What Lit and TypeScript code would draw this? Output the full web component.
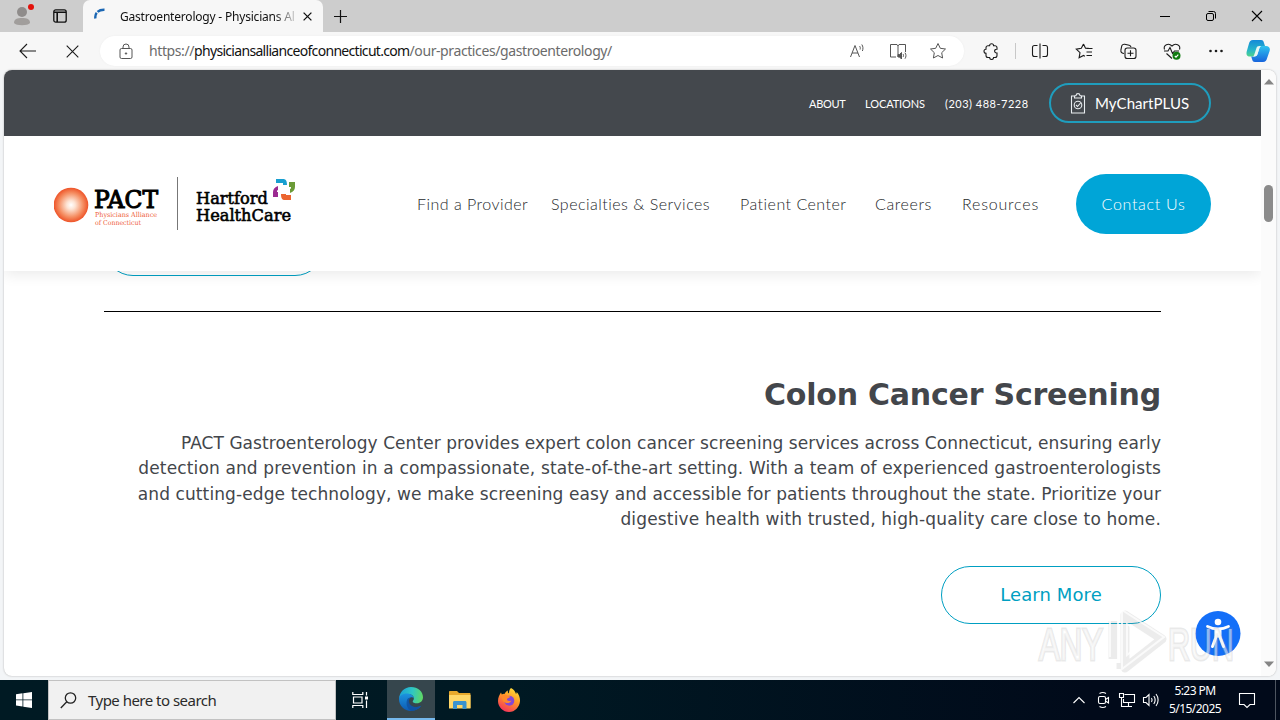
import { LitElement, css, html, svg } from 'lit';
import { customElement } from 'lit/decorators.js';

@customElement('browser-tabs')
export class BrowserTabs extends LitElement {
    render() {
        return html`
            <div class="profile">
                <svg width="26" height="28" viewBox="0 0 26 28">
                    <circle cx="12" cy="11" r="5" fill="#8f8c8b" />
                    <path d="M4 22c0-4 3-5 8-5s8 1 8 5c-2 3-14 3-16 0z" fill="#a19e9c" />
                    <circle cx="21" cy="6" r="3" fill="#e3120b" />
                </svg>
            </div>
            <div class="actions">
                <svg width="14" height="14" viewBox="0 0 14 14" fill="none" stroke="#111" stroke-width="1.3">
                    <rect x=".8" y=".8" width="12.4" height="12.4" rx="2" />
                    <path d="M1 3.2h12M4.2 3v10" stroke-width="1.6" />
                </svg>
            </div>
            <div class="tab">
                <svg class="spinner" width="14" height="14" viewBox="0 0 14 14" fill="none" stroke="#1a66b3" stroke-width="2.4">
                    <path d="M1.400 10.500C.6 5 4.500 1.500 10.500 1.700" stroke-dasharray="6 1.200 9" />
                </svg>
                <span class="title">Gastroenterology - Physicians Alliance</span>
                <svg width="9" height="9" viewBox="0 0 9 9" stroke="#111" stroke-width="1.3"><path d="M.6.6l7.800 7.800M8.400.6L.6 8.400" /></svg>
            </div>
            <svg class="add" width="13" height="13" viewBox="0 0 13 13" stroke="#111" stroke-width="1.2"><path d="M6.500 0v13M0 6.500h13" /></svg>
            <div class="controls">
                <svg width="46" height="32" viewBox="0 0 46 32"><path d="M18 16.500h10" stroke="#000" /></svg>
                <svg width="46" height="32" viewBox="0 0 46 32" fill="none" stroke="#000">
                    <rect x="18.500" y="13.500" width="7" height="7" rx="1.500" />
                    <path d="M20.500 11.500h5a2 2 0 0 1 2 2v5" />
                </svg>
                <svg width="46" height="32" viewBox="0 0 46 32" stroke="#000" stroke-width="1.100"><path d="M18 11l10 10M28 11L18 21" /></svg>
            </div>
        `;
    }

    static styles = css`
        :host {
            display: flex;
            height: 32px;
            background: #cdcdcd;
            align-items: center;
            font-family: 'Noto Sans', sans-serif;
        }
        .profile {
            width: 43px;
            padding-left: 10px;
            box-sizing: border-box;
            height: 30px;
        }
        .actions {
            width: 40px;
            padding-left: 10px;
            box-sizing: border-box;
            display: flex;
        }
        .tab {
            display: flex;
            align-items: center;
            width: 240px;
            height: 32px;
            padding: 0 11px 0 11px;
            box-sizing: border-box;
            background: #f7f7f7;
            border-radius: 7px 7px 0 0;
        }
        .spinner {
            margin-top: -2px;
        }
        .title {
            flex: 1;
            margin: 0 9px 0 12px;
            overflow: hidden;
            white-space: nowrap;
            font-size: 12px;
            letter-spacing: -0.2px;
            color: #111;
            mask-image: linear-gradient(90deg, #000 154px, transparent 180px);
        }
        .add {
            margin-left: 11px;
        }
        .controls {
            display: flex;
            margin-left: auto;
        }
    `;
}

const toolIcons = {
    split: svg`<path d="M7.500 4.500h-3a2 2 0 0 0-2 2v7a2 2 0 0 0 2 2h3M12.500 4.500h3a2 2 0 0 1 2 2v7a2 2 0 0 1-2 2h-3M10 2.500v15" />`,
    favorites: svg`<path d="M9.500 3l2 4.300h3.200M9.500 3L7.300 7.300l-5 .8 3.700 3.500-.9 5.200 4.400-2.400 1.400.8M12.500 7.500h6M12.500 11h5.500M12.500 14.500h5.500" />`,
    collections: svg`<path d="M6 12.500l-1.200-.3a2.500 2.500 0 0 1-1.900-3l.8-4a2.500 2.500 0 0 1 3-1.900l4.500 1a2.500 2.500 0 0 1 1.800 1.700" /><rect x="7" y="7" width="11" height="10.500" rx="2.300" /><path d="M12.500 9.300v6M9.500 12.300h6" />`,
};

@customElement('browser-toolbar')
export class BrowserToolbar extends LitElement {
    render() {
        return html`
            <div class="btn">
                <svg width="18" height="16" viewBox="0 0 18 16"><path d="M17 8H1.500M8 1L1 8l7 7" /></svg>
            </div>
            <div class="btn">
                <svg width="13" height="13" viewBox="0 0 13 13"><path d="M.7.7l11.600 11.600M12.300.7L.7 12.300" /></svg>
            </div>
            <div class="address">
                <svg width="14" height="17" viewBox="0 0 14 17" stroke="#555">
                    <rect x="1" y="5.500" width="12" height="10" rx="1.500" />
                    <path d="M4 5.500V4a3 3 0 0 1 6 0v1.500" />
                    <circle cx="7" cy="10.500" r=".7" fill="#555" />
                </svg>
                <span class="url">https://<b>physiciansallianceofconnecticut.com</b>/our-practices/gastroenterology/</span>
                <div class="tool">
                    <svg width="18" height="18" viewBox="0 0 18 18"><path d="M1.500 15L6 3.500 10.500 15M3 11h6M10.500 4c.8 1 1 2.200.6 3.500M12.800 2.500c1.300 2 1.500 4.200.6 6.500" /></svg>
                </div>
                <div class="tool">
                    <svg width="18" height="18" viewBox="0 0 18 18">
                        <path d="M7 15H1.500V2.500H8L9 4l1-1.500h6.500V10M9 4v11" />
                        <path d="M9 12.500h1.500l2-2v6.500l-2-2H9z" fill="#555" />
                        <path d="M14 12c.7 1 .7 2 0 3M16 10.700c1.300 2 1.300 4 0 6" />
                    </svg>
                </div>
                <div class="tool">
                    <svg width="18" height="18" viewBox="0 0 18 18"><path d="M9 1.500l2.300 4.800 5.200.7-3.800 3.700.9 5.300L9 13.500 4.400 16l.9-5.300L1.500 7l5.200-.7z" /></svg>
                </div>
            </div>
            <div class="btn ext">
                <svg width="18" height="18" viewBox="0 0 18 18"><path d="M6 3.700h1.600a2 2 0 1 1 4 0H13a2 2 0 0 1 2 2v1.500h-.5a1.900 1.900 0 1 0 0 3.800h.5v2.500a2 2 0 0 1-2 2h-1.400a2 2 0 1 1-4 0H6a2 2 0 0 1-2-2V11.300a2 2 0 1 1 0-4V5.700a2 2 0 0 1 2-2z" /></svg>
            </div>
            <div class="separator"></div>
            <div class="btn"><svg width="20" height="20" viewBox="0 0 20 20">${toolIcons.split}</svg></div>
            <div class="btn"><svg width="20" height="20" viewBox="0 0 20 20">${toolIcons.favorites}</svg></div>
            <div class="btn"><svg width="20" height="20" viewBox="0 0 20 20">${toolIcons.collections}</svg></div>
            <div class="btn">
                <svg width="20" height="20" viewBox="0 0 20 20">
                    <path d="M2.500 8.500C1 4 6.500 1.500 10 5c3.500-3.500 9-1 7.500 3.500M4.500 12.500L10 17.500M2 10h4l2-3.500 2.500 6L12.500 10H17" />
                    <circle cx="14.500" cy="14.800" r="4" fill="#107c10" stroke="none" />
                    <path d="M12.800 15l1.200 1.100 2.300-2.500" stroke="#fff" />
                </svg>
            </div>
            <div class="btn">
                <svg width="16" height="4" viewBox="0 0 16 4" class="dots"><circle cx="2.500" cy="2" r="1.300" /><circle cx="8" cy="2" r="1.300" /><circle cx="13.500" cy="2" r="1.300" /></svg>
            </div>
            <div class="copilot">
                <svg width="24" height="24" viewBox="0 0 24 24">
                    <defs>
                        <linearGradient id="left" x1="0" y1="0" x2="0" y2="1"><stop offset="0" stop-color="#1489d8" /><stop offset=".6" stop-color="#27b6c9" /><stop offset="1" stop-color="#4fd38a" /></linearGradient>
                        <linearGradient id="right" x1="0" y1="0" x2="0" y2="1"><stop offset="0" stop-color="#2ec3ef" /><stop offset="1" stop-color="#1764dc" /></linearGradient>
                    </defs>
                    <path d="M7 1h8c2 0 2.500 1 3 3l1 3h-4c-2 0-2.600 1-3.200 3l-1.600 5c-.5 1.700-1.200 2.500-3 2.500H4c-3 0-4-2-3.300-5L3 4.500C3.700 2.200 4.500 1 7 1z" fill="url(#left)" />
                    <path d="M17 23H9c-2 0-2.500-1-3-3l-.8-2.500H8c2 0 3-.8 3.600-2.700l1.800-5.600C14 7.500 14.500 7 16.500 7H20c3 0 4.500 2 3.600 5L21 19.500c-.7 2.300-1.500 3.500-4 3.500z" fill="url(#right)" />
                    <path d="M13.500 8.500c.6-1.200 1.200-1.500 2.500-1.500h-2.500c-2 0-2.600.7-3.200 2.500l-2 6c-.4 1.300-.8 2-2 2H8.500c1.800 0 2.600-.9 3.100-2.700z" fill="#e8f8f3" />
                </svg>
            </div>
        `;
    }

    static styles = css`
        :host {
            display: flex;
            align-items: center;
            height: 38px;
            padding: 0 2px 0 6px;
            box-sizing: border-box;
            background: #f7f7f7;
            font-family: 'Noto Sans', sans-serif;
        }
        svg {
            fill: none;
            stroke: #1b1b1b;
            stroke-width: 1.1;
        }
        .btn {
            display: flex;
            justify-content: center;
            width: 44px;
        }
        .dots {
            fill: #1b1b1b;
            stroke: none;
        }
        .address {
            display: flex;
            flex: 1;
            align-items: center;
            height: 30px;
            margin: 0 7px 0 6px;
            padding: 0 6px 0 19px;
            border-radius: 15px;
            background: #fff;
            box-shadow: 0 0 2px #ececec;
        }
        .address svg {
            stroke: #555;
            stroke-width: 1;
        }
        .url {
            flex: 1;
            margin: -1px 0 0 16px;
            font-size: 14px;
            letter-spacing: -0.4px;
            color: #6b6b6b;
            white-space: nowrap;
        }
        .url b {
            font-weight: 400;
            letter-spacing: -0.69px;
            color: #111;
        }
        .tool {
            display: flex;
            justify-content: center;
            width: 40px;
        }
        .ext {
            width: 40px;
        }
        .separator {
            width: 1px;
            height: 16px;
            margin: 0 2px 0 4px;
            background: #c8c8c8;
        }
        .copilot {
            display: flex;
            justify-content: center;
            width: 40px;
        }
        .copilot svg {
            stroke: none;
        }
    `;
}

@customElement('site-header')
export class SiteHeader extends LitElement {
    render() {
        return html`
            <div class="topbar">
                <a class="about">ABOUT</a>
                <a class="locations">LOCATIONS</a>
                <a class="phone">(203) 488-7228</a>
                <a class="chart">
                    <svg width="16" height="21" viewBox="0 0 16 21" fill="none" stroke="#e9edf0" stroke-width="1.100">
                        <path d="M4.500 3H1.500v17h13V3h-3M4.500 5V3L6 2.500C6.300 0 9.700 0 10 2.500l1.500.5v2z" />
                        <circle cx="8" cy="12" r="3.800" />
                        <path d="M6 12l1.500 1.500L11 9.500" />
                    </svg>
                    <span>MyChartPLUS</span>
                </a>
            </div>
            <div class="main">
                <svg class="logo" width="250" height="60" viewBox="0 0 250 60">
                    <defs>
                        <radialGradient id="sun"><stop offset="0" stop-color="#fff" /><stop offset=".25" stop-color="#fde3d3" /><stop offset=".7" stop-color="#f58e62" /><stop offset="1" stop-color="#ee5328" /></radialGradient>
                    </defs>
                    <circle cx="17" cy="31" r="17.300" fill="url(#sun)" />
                    <text x="40" y="33.500" class="pact" textLength="64" lengthAdjust="spacingAndGlyphs">PACT</text>
                    <text x="41" y="43" class="sub" textLength="62" lengthAdjust="spacingAndGlyphs">Physicians Alliance</text>
                    <text x="41" y="51" class="sub" textLength="46" lengthAdjust="spacingAndGlyphs">of Connecticut</text>
                    <path d="M123.500 3v53" stroke="#777" />
                    <text x="142" y="30" class="hhc" textLength="72" lengthAdjust="spacingAndGlyphs">Hartford</text>
                    <text x="142" y="47" class="hhc" textLength="95" lengthAdjust="spacingAndGlyphs">HealthCare</text>
                    <path d="M222 5h7c3 0 4 2 4 6h-4V9h-7z" fill="#189fd0" />
                    <path d="M235 8h6v5c0 3-2 5-5 6v-4c1 0 1-1 1-2h-2z" fill="#6b9b37" />
                    <path d="M219 20v-2c0-3 2-5 5-6v4c-1 0-1 1-1 2h1v5h-5z" fill="#9c2a92" />
                    <path d="M227 20h5v1h5v5h-6c-3 0-4-2-4-6z" fill="#ec6530" />
                </svg>
                <nav>
                    <a class="find">Find a Provider</a>
                    <a class="specialties">Specialties &amp; Services</a>
                    <a class="patient">Patient Center</a>
                    <a class="careers">Careers</a>
                    <a class="resources">Resources</a>
                </nav>
                <a class="contact">Contact Us</a>
            </div>
        `;
    }

    static styles = css`
        :host {
            display: block;
            position: relative;
            z-index: 1;
            box-shadow: 0 3px 14px rgba(0, 0, 0, 0.09);
            font-family: Lato, sans-serif;
            white-space: nowrap;
        }
        .topbar {
            display: flex;
            align-items: center;
            justify-content: flex-end;
            gap: 20px;
            height: 66px;
            padding-right: 50px;
            background: #44484d;
            color: #fff;
            font-size: 11px;
        }
        .about {
            width: 36px;
            letter-spacing: -0.3px;
        }
        .locations {
            width: 60px;
            letter-spacing: -0.1px;
        }
        .phone {
            width: 84px;
            letter-spacing: 0.5px;
        }
        .chart {
            display: flex;
            align-items: center;
            width: 162px;
            height: 40px;
            padding-left: 19px;
            box-sizing: border-box;
            border: 2px solid #1f9dbd;
            border-radius: 20px;
            font-size: 15px;
            letter-spacing: 0.05px;
        }
        .chart span {
            margin-left: 9px;
        }
        .main {
            display: flex;
            align-items: center;
            height: 135px;
            padding: 0 50px;
            background: #fff;
        }
        .logo {
            font-family: 'DejaVu Serif', serif;
        }
        .pact {
            font-size: 24px;
            stroke: #000;
            stroke-width: 1.1;
        }
        .sub {
            font-size: 6.8px;
            fill: #ee5a36;
        }
        .hhc {
            font-size: 17px;
            stroke: #000;
            stroke-width: 0.6;
        }
        nav {
            display: flex;
            margin-left: auto;
            margin-right: 37px;
            padding-bottom: 1px;
            color: #25282b;
            font-size: 16px;
            font-weight: 300;
            letter-spacing: 0.48px;
        }
        .find {
            width: 134px;
        }
        .specialties {
            width: 189px;
        }
        .patient {
            width: 135px;
        }
        .careers {
            width: 87px;
            letter-spacing: 0.6px;
        }
        .resources {
            width: 77px;
            letter-spacing: 0.8px;
        }
        .contact {
            width: 135px;
            height: 60px;
            border-radius: 30px;
            background: #00a5d7;
            color: #fff;
            font-size: 16px;
            font-weight: 300;
            letter-spacing: 0.7px;
            line-height: 59px;
            text-align: center;
        }
    `;
}

@customElement('site-content')
export class SiteContent extends LitElement {
    render() {
        return html`
            <a class="button"></a>
            <hr />
            <section>
                <h2>Colon Cancer Screening</h2>
                <p>
                    <span class="l1">PACT Gastroenterology Center provides expert colon cancer screening services across Connecticut, ensuring early</span>
                    <span class="l2">detection and prevention in a compassionate, state-of-the-art setting. With a team of experienced gastroenterologists</span>
                    <span class="l3">and cutting-edge technology, we make screening easy and accessible for patients throughout the state. Prioritize your</span>
                    <span class="l4">digestive health with trusted, high-quality care close to home.</span>
                </p>
                <a class="button">Learn More</a>
            </section>
        `;
    }

    static styles = css`
        :host {
            display: block;
            margin-top: -53px;
            padding: 0 100px;
            color: #43464b;
            font-family: 'DejaVu Sans', Verdana, sans-serif;
        }
        .button {
            display: block;
            width: 220px;
            height: 58px;
            box-sizing: border-box;
            border: 1px solid #009fc2;
            border-radius: 29px;
            color: #009fc2;
            font-size: 18px;
            letter-spacing: 0.1px;
            line-height: 56px;
            text-align: center;
        }
        hr {
            height: 1px;
            margin: 35px 0 0;
            border: 0;
            background: #000;
        }
        section {
            display: flex;
            flex-direction: column;
            align-items: flex-end;
            padding-top: 63px;
            text-align: right;
        }
        h2 {
            margin: 0;
            font-size: 30px;
            letter-spacing: -0.21px;
            line-height: 40px;
            white-space: nowrap;
        }
        p {
            margin: 15.5px 0 33.5px;
            font-size: 17px;
            line-height: 25.5px;
            white-space: nowrap;
        }
        p span {
            display: block;
        }
        .l1 {
            letter-spacing: 0.053px;
        }
        .l2 {
            letter-spacing: 0.139px;
        }
        .l3 {
            letter-spacing: 0.102px;
        }
        .l4 {
            letter-spacing: 0.17px;
        }
    `;
}

@customElement('task-bar')
export class TaskBar extends LitElement {
    render() {
        return html`
            <div class="item start">
                <svg width="16" height="16" viewBox="0 0 16 16" fill="#fff"><path d="M0 2.200L6.500 1.300v6.200H0zM7.300 1.200L16 0v7.500H7.300zM0 8.300h6.500v6.200L0 13.600zM7.300 8.300H16V16l-8.700-1.200z" /></svg>
            </div>
            <div class="search">
                <svg width="17" height="17" viewBox="0 0 17 17" fill="none" stroke="#222" stroke-width="1.300"><circle cx="10.500" cy="6" r="5.200" /><path d="M6.800 9.700L.8 16" /></svg>
                <span>Type here to search</span>
            </div>
            <div class="item view">
                <svg width="17" height="16" viewBox="0 0 17 16" fill="none" stroke="#fff" stroke-width="1.200">
                    <path d="M.8 0v2.500h10V0M.8 16v-2.500h10V16M1.500 5h8.500v6H1.500zM14.500 0v3.500M14.500 8.500V16" />
                    <path d="M13 4.500h3v3h-3z" fill="#fff" stroke="none" />
                </svg>
            </div>
            <div class="item active">
                <svg width="24" height="24" viewBox="0 0 24 24">
                    <defs>
                        <linearGradient id="wave" x1="0" y1=".3" x2="1" y2=".4"><stop offset="0" stop-color="#1a9fd8" /><stop offset=".55" stop-color="#2fc7c4" /><stop offset="1" stop-color="#5fd865" /></linearGradient>
                        <linearGradient id="deep" x1="0" y1="0" x2="0" y2="1"><stop offset="0" stop-color="#1c94e0" /><stop offset="1" stop-color="#0d5ab2" /></linearGradient>
                    </defs>
                    <path d="M0 11.500C.6 5 5.500 0 12 0c7 0 12 4.800 12 10.300 0 3.700-2.800 6-6 6-2.600 0-4.300-.9-4.300-1.800 0-.8 1.200-1.200 1.200-3C14.900 9 12.500 7 9 7c-4 0-7.500 2-9 4.500z" fill="url(#wave)" />
                    <path d="M0 12c0-3 3.600-5.600 7.700-5.600 4 0 7 2.200 7.200 5-1-1.200-2.100-1.500-3.300-1-2.200 1-3.400 6 .7 8.600 3 1.800 6.800 1.500 9.900-.2C20 22 16.300 24 12 24 5.400 24 0 18.700 0 12z" fill="url(#deep)" />
                    <path d="M8 13c-1.500 5 1 10 5 11 3.800-.3 7.200-2.400 9.200-5.200-4.500 2.200-10.800 1.500-12-3.800C9.700 12.800 10.500 11 11.600 10.400 9.500 10.500 8.500 11.500 8 13z" fill="#104f9d" opacity=".8" />
                </svg>
            </div>
            <div class="item">
                <svg width="22" height="20" viewBox="0 0 22 20">
                    <path d="M0 2c0-.6.400-1 1-1h7l2 2h10.500c.6 0 1 .4 1 1v14H0z" fill="#e8a92c" />
                    <path d="M0 5h21.500v13.500H0z" fill="#ffd768" />
                    <path d="M4 19v-6.500c0-1 .7-1.500 1.500-1.500h10.500c1 0 1.500.6 1.500 1.500V19h-4v-4h-5.500v4z" fill="#3a93cf" />
                </svg>
            </div>
            <div class="item">
                <svg width="24" height="24" viewBox="0 0 24 24">
                    <defs>
                        <linearGradient id="fire" x1=".8" y1="0" x2=".3" y2="1"><stop offset="0" stop-color="#ffe23b" /><stop offset=".45" stop-color="#ff9a26" /><stop offset="1" stop-color="#f5315c" /></linearGradient>
                    </defs>
                    <path d="M14 0c3 1.500 4.500 4 5 6 .6-.5.7-1.300.6-2 2.500 2.500 3.600 6 3.400 9-.4 6-5 11-11 11S1 19 1 13c0-3.500 1.500-6.500 3-8.500l.8 2c1-.8 2-1 3-.8C8.500 4 9.500 3 11 2.500 10.500 4 11 5 12 5.500 11.900 3.500 12.500 1.500 14 0z" fill="url(#fire)" />
                    <circle cx="12.300" cy="12.800" r="5" fill="#8447d6" />
                    <path d="M5 7c2-1 4-.5 5.500.8l3 .7c-.6 1.500-3 1.300-3.500 2.500-.3 1.600 1.600 2.700 4.500 1.500-1 3.300-6 3.500-8.500.5C4.700 11 4.500 9 5 7z" fill="#ff8a2a" />
                </svg>
            </div>
            <div class="tray">
                <svg width="24" height="20" viewBox="0 0 24 20"><path d="M6.500 13L12 7.500l5.500 5.500" /></svg>
                <svg width="24" height="20" viewBox="0 0 24 20"><rect x="7.500" y="6.500" width="7" height="7" rx="1.500" /><path d="M14.500 9.500l3-2v5.500l-3-2M8.500 3.500c2-1.200 4.500-1.200 6.500 0M8.500 16.500c2 1.200 4.500 1.200 6.500 0" /></svg>
                <svg width="24" height="20" viewBox="0 0 24 20"><path d="M9.500 4.500h10v8h-11V9M13.500 12.500v3.500M9 16.500h8M4.500 3.500h4v4h-4zM6.500 7.500V16.500h3" /></svg>
                <svg width="24" height="20" viewBox="0 0 24 20"><path d="M4.500 7.500H7l3-3v11l-3-3H4.500zM12.500 8c.8 1.300.8 2.700 0 4M14.800 6c1.700 2.500 1.700 5.500 0 8M17 4c2.800 3.500 2.800 8.500 0 12" /></svg>
            </div>
            <div class="clock"><span>5:23 PM</span><span>5/15/2025</span></div>
            <svg class="note" width="18" height="18" viewBox="0 0 18 18"><path d="M1.500 2.500h15v11H12l-3 3-3-3H1.500z" /></svg>
            <div class="desktop"></div>
        `;
    }

    static styles = css`
        :host {
            display: flex;
            align-items: center;
            height: 40px;
            background: linear-gradient(90deg, #001a23, #001923 40%, #010a1a 85%);
            color: #fff;
            font-family: 'Noto Sans', sans-serif;
        }
        .item {
            display: flex;
            align-items: center;
            justify-content: center;
            width: 49px;
            height: 40px;
            box-sizing: border-box;
        }
        .start {
            width: 48px;
        }
        .search {
            display: flex;
            align-items: center;
            width: 288px;
            height: 40px;
            padding-left: 11px;
            box-sizing: border-box;
            border: 1px solid #c2c2c2;
            background: #f1f1f1;
            color: #2b2b2b;
            font-size: 15px;
            letter-spacing: -0.52px;
        }
        .search span {
            margin-left: 11px;
        }
        .view {
            width: 51px;
            padding-right: 3px;
        }
        .active {
            width: 48px;
            border-bottom: 2px solid #76b9ed;
            background: #36464d;
        }
        .tray {
            display: flex;
            margin-left: auto;
        }
        .tray svg,
        .note {
            fill: none;
            stroke: #fff;
            stroke-width: 1.1;
        }
        .clock {
            display: flex;
            flex-direction: column;
            align-items: center;
            width: 64px;
            font-size: 12px;
            letter-spacing: -0.55px;
            line-height: 18px;
        }
        .note {
            margin: 0 19px 0 11px;
        }
        .desktop {
            width: 4px;
            height: 40px;
            border-left: 1px solid #4d5560;
        }
    `;
}

@customElement('app-root')
export class AppRoot extends LitElement {
    render() {
        return html`
            <browser-tabs></browser-tabs>
            <browser-toolbar></browser-toolbar>
            <div class="frame">
                <div class="page">
                    <site-header></site-header>
                    <site-content></site-content>
                </div>
                <div class="scrollbar">
                    <svg width="10" height="6" viewBox="0 0 10 6"><path d="M0 5.500L5 0l5 5.500z" /></svg>
                    <div class="thumb"></div>
                    <svg class="down" width="10" height="6" viewBox="0 0 10 6"><path d="M0 .5L5 6l5-5.500z" /></svg>
                </div>
            </div>
            <task-bar></task-bar>
            <svg class="access" width="46" height="46" viewBox="0 0 46 46">
                <circle cx="23" cy="22.500" r="22.500" fill="#146ff8" />
                <g fill="none" stroke="#fff" stroke-linecap="round" stroke-linejoin="round">
                    <circle cx="23" cy="11" r="3.300" fill="#fff" stroke="none" />
                    <path d="M12.500 15.500c3 1.500 6 2.500 10.500 2.500s7.500-1 10.500-2.500" stroke-width="2.800" />
                    <path d="M20.500 19.500h5v6h-5z" fill="#fff" stroke-width="2" />
                    <path d="M21 26l-3.500 9.500M25 26l3.500 9.500" stroke-width="3" />
                </g>
            </svg>
            <svg class="watermark" width="212" height="74" viewBox="0 0 212 74">
                <g class="shade">
                    <text x="3" y="54" textLength="64" lengthAdjust="spacingAndGlyphs">ANY</text>
                    <text x="132" y="54" textLength="66" lengthAdjust="spacingAndGlyphs">RUN</text>
                </g>
                <path class="ring" d="M77 15v38M89 9l37 24-37 29zM85 57v6" />
                <path class="line" d="M74 11v40M82 7v46M86 4l42 27-42 32zM91 18l22 14-22 17z" />
            </svg>
        `;
    }

    static styles = css`
        :host {
            display: flex;
            flex-direction: column;
            position: relative;
            width: 1280px;
            height: 720px;
            overflow: hidden;
            background: #f3f5f7;
        }
        .frame {
            display: flex;
            flex: 1;
            margin: 0 4px 4px;
            overflow: hidden;
            border-radius: 8px;
            background: #fff;
            box-shadow: 0 0 2px #aaa;
        }
        .page {
            width: 1257px;
            overflow: hidden;
        }
        .scrollbar {
            display: flex;
            flex: 1;
            flex-direction: column;
            align-items: center;
            padding: 9px 0;
            background: #fbfbfb;
            fill: #858585;
        }
        .thumb {
            width: 9px;
            height: 37px;
            margin-top: 100px;
            border-radius: 5px;
            background: #8b8b8b;
        }
        .down {
            margin-top: auto;
        }
        .access {
            position: absolute;
            left: 1195px;
            top: 611px;
        }
        .watermark {
            position: absolute;
            left: 1036px;
            top: 606px;
            fill: none;
            font: 400 44px 'Liberation Sans', sans-serif;
        }
        .shade {
            fill: rgba(255, 255, 255, 0.5);
            stroke: rgba(140, 140, 140, 0.2);
            stroke-width: 3;
            paint-order: stroke;
        }
        .ring {
            stroke: rgba(140, 140, 140, 0.17);
            stroke-width: 9;
            stroke-linejoin: round;
        }
        .line {
            stroke: rgba(255, 255, 255, 0.75);
            stroke-width: 2;
        }
    `;
}
